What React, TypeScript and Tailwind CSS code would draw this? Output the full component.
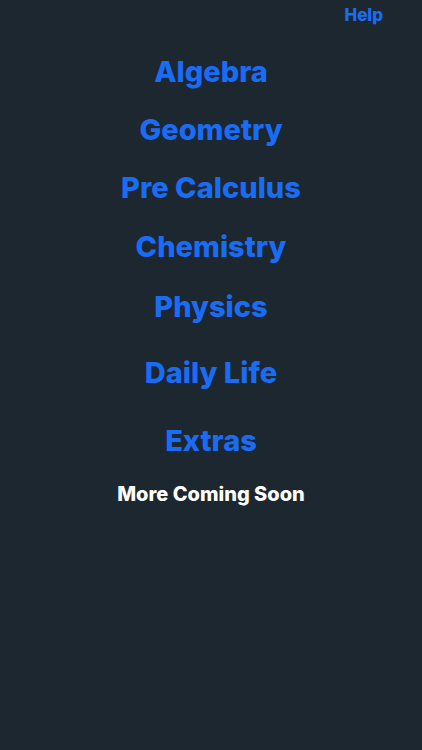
const SUBJECTS: { name: string; mt: string }[] = [
  { name: 'Algebra', mt: 'mt-[25px]' },
  { name: 'Geometry', mt: 'mt-[24px]' },
  { name: 'Pre Calculus', mt: 'mt-[24px]' },
  { name: 'Chemistry', mt: 'mt-[25px]' },
  { name: 'Physics', mt: 'mt-[26px]' },
  { name: 'Daily Life', mt: 'mt-[32px]' },
  { name: 'Extras', mt: 'mt-[34px]' },
]

export default function App() {
  return (
    <div className="min-h-[750px] w-full bg-[#1c2730] font-['Inter',_'Noto_Sans',_sans-serif]">
      <div className="flex h-[30px] items-center justify-end pr-[39px]">
        <button className="text-[17px] font-extrabold leading-none text-[#1a6cf4]">Help</button>
      </div>

      <div className="flex flex-col items-center">
        {SUBJECTS.map((s) => (
          <button
            key={s.name}
            className={`${s.mt} text-[29px] font-extrabold leading-[34px] text-[#1a6cf4]`}
          >
            {s.name}
          </button>
        ))}
        <p className="mt-[24px] text-[20px] font-extrabold leading-[24px] text-white">
          More Coming Soon
        </p>
      </div>
    </div>
  )
}
